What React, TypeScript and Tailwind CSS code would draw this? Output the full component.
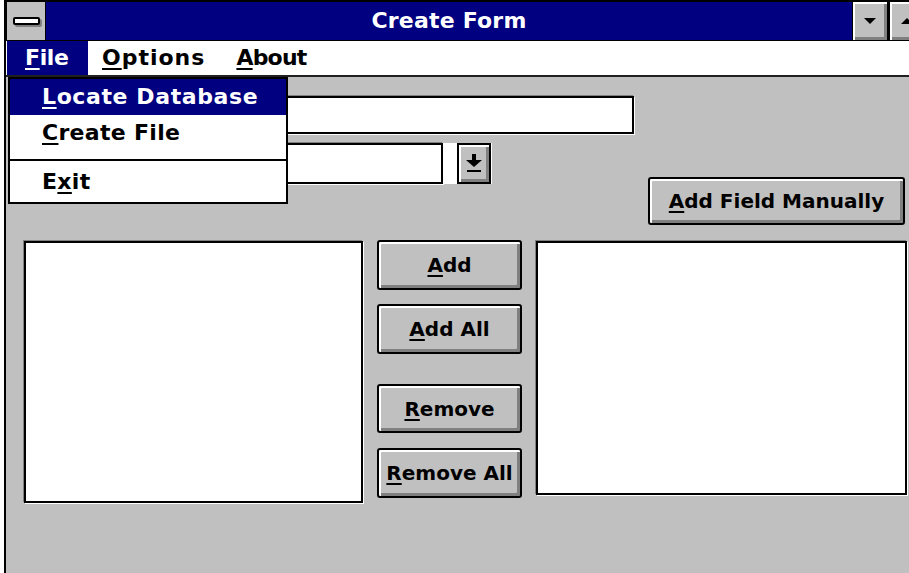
import React from "react";

const FONT = "font-['DejaVu_Sans',sans-serif] font-bold text-[20px] leading-none";
const MENU_FONT = "text-[22px]";
const BTN =
  "border-2 border-black rounded-[3px] bg-[#c0c0c0] shadow-[inset_2px_2px_0_#ffffff,inset_-3px_-3px_0_#808080] flex items-center justify-center text-black";
const SUNKEN = "bg-white border-2 border-black shadow-[-1px_-1px_0_#808080,1px_1px_0_#ffffff]";
const RAISED = "bg-[#c0c0c0] shadow-[inset_2px_2px_0_#ffffff,inset_-3px_-3px_0_#808080]";

function Key({ k }: { k: string }) {
  return <span className="underline decoration-2 underline-offset-[3px]">{k}</span>;
}

function Button({ className, children }: { className: string; children: React.ReactNode }) {
  return <div className={`${BTN} ${className}`}>{children}</div>;
}

function TitleBar() {
  return (
    <div className="flex h-[41px] bg-black pt-[2px] pb-[1px]">
      <div className="ml-[1px] w-[38px] bg-[#c0c0c0] flex items-center justify-center">
        <div className="w-[27px] h-[8px] bg-white border-2 border-black rounded-[2px] shadow-[2px_2px_0_#808080]" />
      </div>
      <div className={`ml-[1px] flex-1 bg-[#000080] flex items-center justify-center text-white ${MENU_FONT}`}>
        <span className="tracking-[0.2px]">Create Form</span>
      </div>
      <div className={`ml-[1px] w-[34px] ${RAISED} flex items-center justify-center`}>
        <svg width="12" height="7" viewBox="0 0 12 7">
          <polygon points="0,0 12,0 6,6" fill="#000" />
        </svg>
      </div>
      <div className={`ml-[3px] w-[34px] ${RAISED} flex items-center justify-center`}>
        <svg width="12" height="7" viewBox="0 0 12 7">
          <polygon points="0,6 12,6 6,0" fill="#000" />
        </svg>
      </div>
      <div className="w-[4px]" />
    </div>
  );
}

function MenuBar() {
  return (
    <div className={`flex h-[36px] bg-white border-b-2 border-[#202020] text-black ${MENU_FONT}`}>
      <div className="ml-[1px] w-[81px] bg-[#000080] text-white flex items-center pl-[18px]">
        <span className="tracking-[-0.4px]">
          <Key k="F" />ile
        </span>
      </div>
      <div className="ml-[14px] flex items-center">
        <span className="tracking-[1px]">
          <Key k="O" />ptions
        </span>
      </div>
      <div className="ml-[31px] flex items-center">
        <span className="tracking-[-0.8px]">
          <Key k="A" />bout
        </span>
      </div>
    </div>
  );
}

function FileMenu() {
  return (
    <div className={`absolute left-[2px] top-0 w-[280px] bg-white border-2 border-black text-black ${MENU_FONT}`}>
      <div className="h-[36px] bg-[#000080] text-white flex items-center pl-[32px]">
        <span className="tracking-[0.6px]">
          <Key k="L" />ocate Database
        </span>
      </div>
      <div className="h-[36px] flex items-center pl-[32px]">
        <span className="tracking-[0.3px]">
          <Key k="C" />reate File
        </span>
      </div>
      <div className="mt-[8px] h-[2px] bg-black" />
      <div className="h-[41px] flex items-center pl-[32px]">
        <span className="tracking-[0.3px]">
          E<Key k="x" />it
        </span>
      </div>
    </div>
  );
}

function ComboArrow() {
  return (
    <svg width="16" height="19" viewBox="0 0 16 19">
      <rect x="6" y="0" width="4" height="6" fill="#000" />
      <polygon points="0,6 16,6 8,13" fill="#000" />
      <rect x="1" y="16" width="14" height="2" fill="#000" />
    </svg>
  );
}

export default function App() {
  return (
    <div className={`relative w-[909px] h-[573px] overflow-hidden bg-white ${FONT}`}>
      <div className="ml-[4px] w-[924px] h-full border-l-2 border-black flex flex-col">
        <TitleBar />
        <MenuBar />
        <div className="relative flex-1 bg-[#c0c0c0] pl-[18px] pt-[19px]">
          <div className="flex">
            <div className="w-[610px] flex flex-col gap-[9px]">
              <div className={`${SUNKEN} ml-[156px] h-[38px]`} />
              <div className="ml-[156px] self-start flex h-[41px] bg-white">
                <div className={`${SUNKEN} w-[263px] h-full`} />
                <div className="ml-[14px] w-[35px] h-full">
                  <div className={`w-[34px] h-full border-2 border-black ${RAISED} flex items-center justify-center`}>
                    <ComboArrow />
                  </div>
                </div>
              </div>
            </div>
            <div className="ml-[14px] pt-[81px]">
              <Button className="w-[257px] h-[48px]">
                <span>
                  <Key k="A" />dd Field Manually
                </span>
              </Button>
            </div>
          </div>

          <div className="mt-[15px] flex items-start">
            <div className={`${SUNKEN} mt-[1px] w-[339px] h-[262px]`} />
            <div className="ml-[14px] w-[145px] flex flex-col">
              <Button className="h-[50px]">
                <span>
                  <Key k="A" />dd
                </span>
              </Button>
              <Button className="mt-[14px] h-[50px]">
                <span>
                  <Key k="A" />dd All
                </span>
              </Button>
              <Button className="mt-[30px] h-[49px]">
                <span>
                  <Key k="R" />emove
                </span>
              </Button>
              <Button className="mt-[15px] h-[50px]">
                <span>
                  <Key k="R" />emove All
                </span>
              </Button>
            </div>
            <div className={`${SUNKEN} ml-[14px] mt-[1px] w-[371px] h-[254px]`} />
          </div>

          <FileMenu />
        </div>
      </div>
    </div>
  );
}
